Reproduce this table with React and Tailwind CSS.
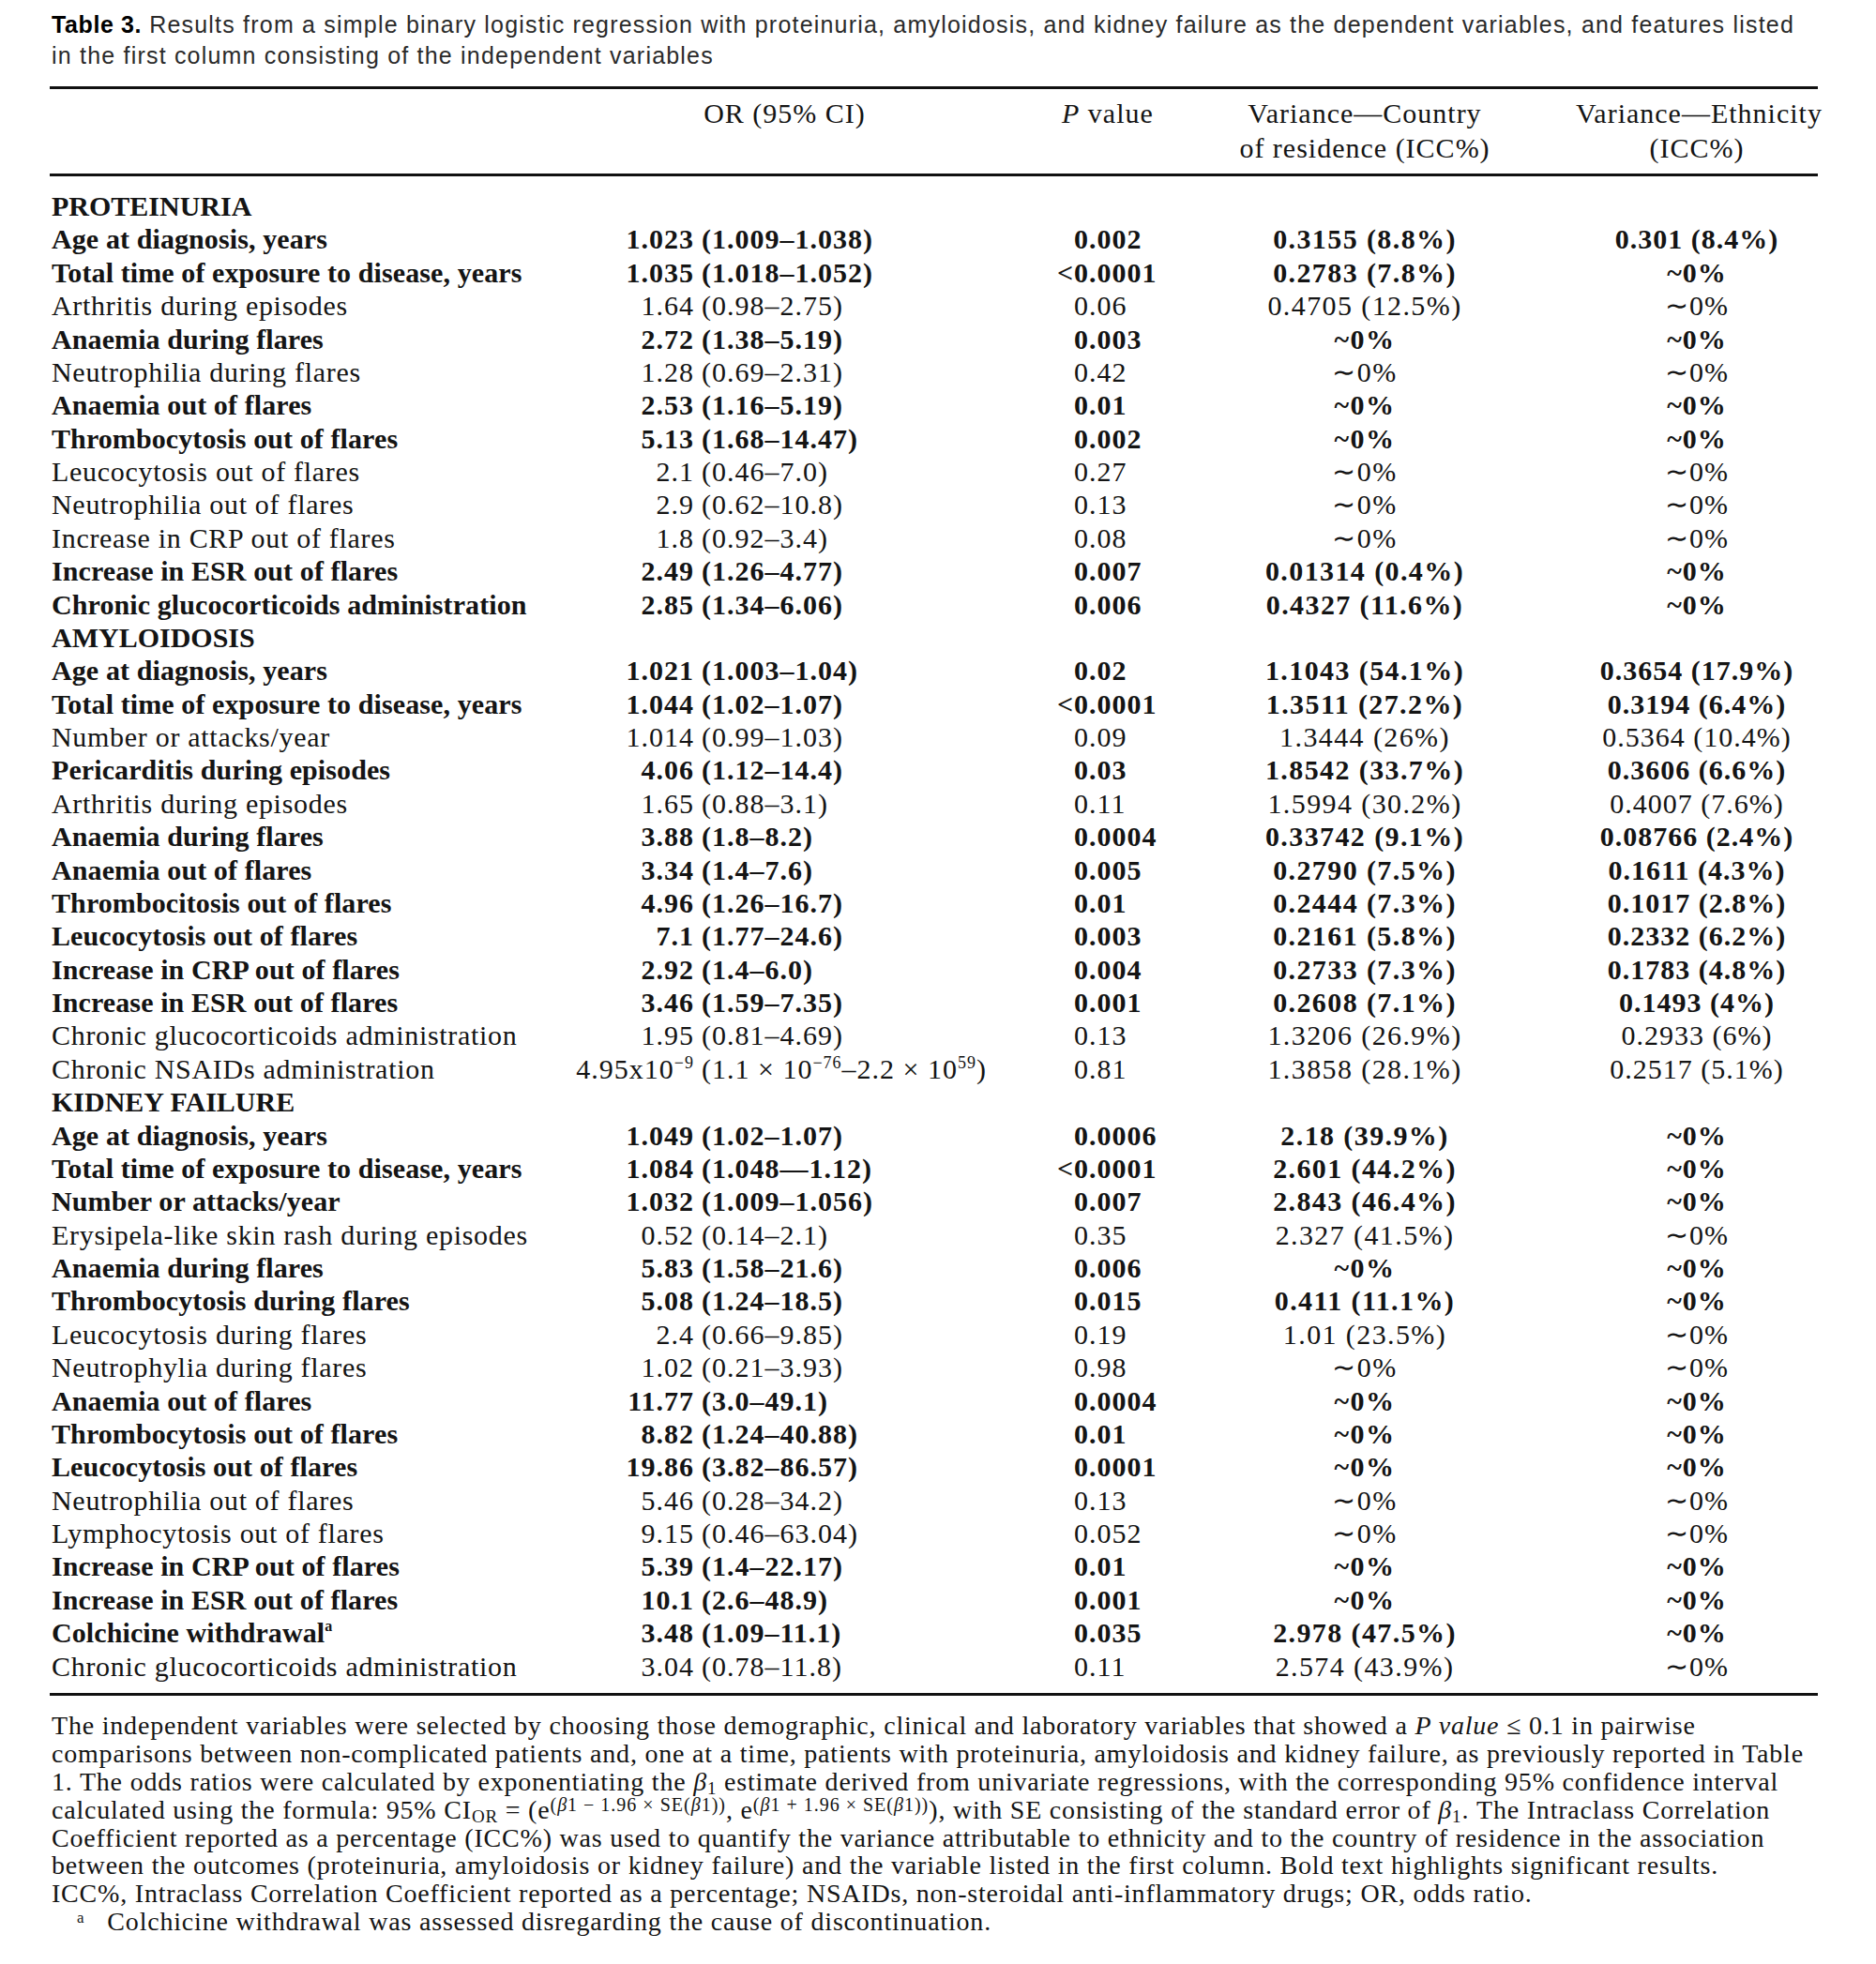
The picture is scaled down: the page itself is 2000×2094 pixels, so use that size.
import React from "react";

const sec = (title) => ({ h: title });
const sp = "text-[18px] leading-none relative top-[-11px]";

const rows = [
  sec("PROTEINURIA"),
  { l: "Age at diagnosis, years", n: "1.023", ci: "(1.009–1.038)", p: "0.002", c: "0.3155 (8.8%)", e: "0.301 (8.4%)", b: 1 },
  { l: "Total time of exposure to disease, years", n: "1.035", ci: "(1.018–1.052)", lt: 1, p: "0.0001", c: "0.2783 (7.8%)", e: "~0%", b: 1 },
  { l: "Arthritis during episodes", n: "1.64", ci: "(0.98–2.75)", p: "0.06", c: "0.4705 (12.5%)", e: "∼0%" },
  { l: "Anaemia during flares", n: "2.72", ci: "(1.38–5.19)", p: "0.003", c: "~0%", e: "~0%", b: 1 },
  { l: "Neutrophilia during flares", n: "1.28", ci: "(0.69–2.31)", p: "0.42", c: "∼0%", e: "∼0%" },
  { l: "Anaemia out of flares", n: "2.53", ci: "(1.16–5.19)", p: "0.01", c: "~0%", e: "~0%", b: 1 },
  { l: "Thrombocytosis out of flares", n: "5.13", ci: "(1.68–14.47)", p: "0.002", c: "~0%", e: "~0%", b: 1 },
  { l: "Leucocytosis out of flares", n: "2.1", ci: "(0.46–7.0)", p: "0.27", c: "∼0%", e: "∼0%" },
  { l: "Neutrophilia out of flares", n: "2.9", ci: "(0.62–10.8)", p: "0.13", c: "∼0%", e: "∼0%" },
  { l: "Increase in CRP out of flares", n: "1.8", ci: "(0.92–3.4)", p: "0.08", c: "∼0%", e: "∼0%" },
  { l: "Increase in ESR out of flares", n: "2.49", ci: "(1.26–4.77)", p: "0.007", c: "0.01314 (0.4%)", e: "~0%", b: 1 },
  { l: "Chronic glucocorticoids administration", n: "2.85", ci: "(1.34–6.06)", p: "0.006", c: "0.4327 (11.6%)", e: "~0%", b: 1 },
  sec("AMYLOIDOSIS"),
  { l: "Age at diagnosis, years", n: "1.021", ci: "(1.003–1.04)", p: "0.02", c: "1.1043 (54.1%)", e: "0.3654 (17.9%)", b: 1 },
  { l: "Total time of exposure to disease, years", n: "1.044", ci: "(1.02–1.07)", lt: 1, p: "0.0001", c: "1.3511 (27.2%)", e: "0.3194 (6.4%)", b: 1 },
  { l: "Number or attacks/year", n: "1.014", ci: "(0.99–1.03)", p: "0.09", c: "1.3444 (26%)", e: "0.5364 (10.4%)" },
  { l: "Pericarditis during episodes", n: "4.06", ci: "(1.12–14.4)", p: "0.03", c: "1.8542 (33.7%)", e: "0.3606 (6.6%)", b: 1 },
  { l: "Arthritis during episodes", n: "1.65", ci: "(0.88–3.1)", p: "0.11", c: "1.5994 (30.2%)", e: "0.4007 (7.6%)" },
  { l: "Anaemia during flares", n: "3.88", ci: "(1.8–8.2)", p: "0.0004", c: "0.33742 (9.1%)", e: "0.08766 (2.4%)", b: 1 },
  { l: "Anaemia out of flares", n: "3.34", ci: "(1.4–7.6)", p: "0.005", c: "0.2790 (7.5%)", e: "0.1611 (4.3%)", b: 1 },
  { l: "Thrombocitosis out of flares", n: "4.96", ci: "(1.26–16.7)", p: "0.01", c: "0.2444 (7.3%)", e: "0.1017 (2.8%)", b: 1 },
  { l: "Leucocytosis out of flares", n: "7.1", ci: "(1.77–24.6)", p: "0.003", c: "0.2161 (5.8%)", e: "0.2332 (6.2%)", b: 1 },
  { l: "Increase in CRP out of flares", n: "2.92", ci: "(1.4–6.0)", p: "0.004", c: "0.2733 (7.3%)", e: "0.1783 (4.8%)", b: 1 },
  { l: "Increase in ESR out of flares", n: "3.46", ci: "(1.59–7.35)", p: "0.001", c: "0.2608 (7.1%)", e: "0.1493 (4%)", b: 1 },
  { l: "Chronic glucocorticoids administration", n: "1.95", ci: "(0.81–4.69)", p: "0.13", c: "1.3206 (26.9%)", e: "0.2933 (6%)" },
  {
    l: "Chronic NSAIDs administration",
    n: (
      <>
        4.95x10<span className={sp}>−9</span>
      </>
    ),
    ci: (
      <>
        (1.1 × 10<span className={sp}>−76</span>–2.2 × 10<span className={sp}>59</span>)
      </>
    ),
    p: "0.81",
    c: "1.3858 (28.1%)",
    e: "0.2517 (5.1%)",
  },
  sec("KIDNEY FAILURE"),
  { l: "Age at diagnosis, years", n: "1.049", ci: "(1.02–1.07)", p: "0.0006", c: "2.18 (39.9%)", e: "~0%", b: 1 },
  { l: "Total time of exposure to disease, years", n: "1.084", ci: "(1.048—1.12)", lt: 1, p: "0.0001", c: "2.601 (44.2%)", e: "~0%", b: 1 },
  { l: "Number or attacks/year", n: "1.032", ci: "(1.009–1.056)", p: "0.007", c: "2.843 (46.4%)", e: "~0%", b: 1 },
  { l: "Erysipela-like skin rash during episodes", n: "0.52", ci: "(0.14–2.1)", p: "0.35", c: "2.327 (41.5%)", e: "∼0%" },
  { l: "Anaemia during flares", n: "5.83", ci: "(1.58–21.6)", p: "0.006", c: "~0%", e: "~0%", b: 1 },
  { l: "Thrombocytosis during flares", n: "5.08", ci: "(1.24–18.5)", p: "0.015", c: "0.411 (11.1%)", e: "~0%", b: 1 },
  { l: "Leucocytosis during flares", n: "2.4", ci: "(0.66–9.85)", p: "0.19", c: "1.01 (23.5%)", e: "∼0%" },
  { l: "Neutrophylia during flares", n: "1.02", ci: "(0.21–3.93)", p: "0.98", c: "∼0%", e: "∼0%" },
  { l: "Anaemia out of flares", n: "11.77", ci: "(3.0–49.1)", p: "0.0004", c: "~0%", e: "~0%", b: 1 },
  { l: "Thrombocytosis out of flares", n: "8.82", ci: "(1.24–40.88)", p: "0.01", c: "~0%", e: "~0%", b: 1 },
  { l: "Leucocytosis out of flares", n: "19.86", ci: "(3.82–86.57)", p: "0.0001", c: "~0%", e: "~0%", b: 1 },
  { l: "Neutrophilia out of flares", n: "5.46", ci: "(0.28–34.2)", p: "0.13", c: "∼0%", e: "∼0%" },
  { l: "Lymphocytosis out of flares", n: "9.15", ci: "(0.46–63.04)", p: "0.052", c: "∼0%", e: "∼0%" },
  { l: "Increase in CRP out of flares", n: "5.39", ci: "(1.4–22.17)", p: "0.01", c: "~0%", e: "~0%", b: 1 },
  { l: "Increase in ESR out of flares", n: "10.1", ci: "(2.6–48.9)", p: "0.001", c: "~0%", e: "~0%", b: 1 },
  {
    l: (
      <>
        Colchicine withdrawal<span className="text-[16px] leading-none relative top-[-12px] font-bold">a</span>
      </>
    ),
    n: "3.48",
    ci: "(1.09–11.1)",
    p: "0.035",
    c: "2.978 (47.5%)",
    e: "~0%",
    b: 1,
  },
  { l: "Chronic glucocorticoids administration", n: "3.04", ci: "(0.78–11.8)", p: "0.11", c: "2.574 (43.9%)", e: "∼0%" },
];

function Row({ r }) {
  if (r.h) {
    return (
      <div className="h-[35.38px] leading-[35.38px] pl-[2px] font-bold whitespace-nowrap">{r.h}</div>
    );
  }
  const bold = r.b ? "font-bold" : "font-normal";
  const lab = r.b ? "tracking-[0.1px]" : "tracking-[0.7px]";
  return (
    <div className={`flex h-[35.38px] leading-[35.38px] whitespace-nowrap ${bold}`}>
      <div className={`w-[520px] pl-[2px] ${lab}`}>{r.l}</div>
      <div className="w-[527px] flex tracking-[1px]">
        <div className="w-[167px] text-right">{r.n}</div>
        <div className="pl-[8px]">{r.ci}</div>
      </div>
      <div className="w-[180px] flex tracking-[1px]">
        <div className="w-[45px] text-right">{r.lt ? "<" : ""}</div>
        <div>{r.p}</div>
      </div>
      <div className="w-[350px] text-center tracking-[1.4px]">{r.c}</div>
      <div className="w-[50px]" />
      <div className="w-[258px] text-center tracking-[1px]">{r.e}</div>
    </div>
  );
}

const sup = "text-[20px] leading-none relative top-[-8px] tracking-[1px]";
const sb = "text-[19px] leading-none relative top-[4px]";

export default function App() {
  return (
    <div className="w-[2000px] h-[2094px] bg-white text-[#141414] overflow-hidden">
      <div className="pt-[10px] pl-[55px] font-['Liberation_Sans',Arial,sans-serif] text-[25px] leading-[33px] tracking-[1.2px] text-[#2a2a2a] whitespace-nowrap">
        <div>
          <span className="font-bold text-black tracking-[0.6px]">Table 3.</span> Results from a simple binary logistic regression with proteinuria, amyloidosis, and kidney failure as the dependent variables, and features listed
        </div>
        <div>in the first column consisting of the independent variables</div>
      </div>

      <div className="ml-[53px] w-[1885px] mt-[16px] font-['Liberation_Serif','Times_New_Roman',serif] text-[30px]">
        <div className="h-[3px] bg-[#111]" />
        <div className="flex pt-[7px] pb-[9px] leading-[37px] tracking-[1px] whitespace-nowrap">
          <div className="w-[520px]" />
          <div className="w-[527px] text-center">OR (95% CI)</div>
          <div className="w-[180px] pl-[32px]">
            <i>P</i> value
          </div>
          <div className="w-[350px] text-center">
            <div>Variance—Country</div>
            <div>of residence (ICC%)</div>
          </div>
          <div className="w-[50px]" />
          <div className="w-[258px] text-center">
            <div>Variance—Ethnicity</div>
            <div>(ICC%)</div>
          </div>
        </div>
        <div className="h-[3px] bg-[#111]" />
        <div className="pt-[14px] pb-[11px]">
          {rows.map((r, i) => (
            <Row key={i} r={r} />
          ))}
        </div>
        <div className="h-[3px] bg-[#111]" />
      </div>

      <div className="pl-[55px] pt-[17px] font-['Liberation_Serif','Times_New_Roman',serif] text-[28px] leading-[29.9px] tracking-[0.8px] text-[#141414] whitespace-nowrap">
        <div>
          The independent variables were selected by choosing those demographic, clinical and laboratory variables that showed a <i>P value</i> ≤ 0.1 in pairwise
        </div>
        <div>
          comparisons between non-complicated patients and, one at a time, patients with proteinuria, amyloidosis and kidney failure, as previously reported in Table
        </div>
        <div>
          1. The odds ratios were calculated by exponentiating the <i>β</i>
          <span className={sb}>1</span> estimate derived from univariate regressions, with the corresponding 95% confidence interval
        </div>
        <div>
          calculated using the formula: 95% CI<span className={sb}>OR</span> = (e
          <span className={sup}>
            (<i>β</i>1 − 1.96 × SE(<i>β</i>1))
          </span>
          , e
          <span className={sup}>
            (<i>β</i>1 + 1.96 × SE(<i>β</i>1))
          </span>
          ), with SE consisting of the standard error of <i>β</i>
          <span className={sb}>1</span>. The Intraclass Correlation
        </div>
        <div>
          Coefficient reported as a percentage (ICC%) was used to quantify the variance attributable to ethnicity and to the country of residence in the association
        </div>
        <div>
          between the outcomes (proteinuria, amyloidosis or kidney failure) and the variable listed in the first column. Bold text highlights significant results.
        </div>
        <div>ICC%, Intraclass Correlation Coefficient reported as a percentage; NSAIDs, non-steroidal anti-inflammatory drugs; OR, odds ratio.</div>
        <div className="pl-[27px]">
          <span className="text-[17px] leading-none relative top-[-8px]">a</span>
          <span className="pl-[24px]">Colchicine withdrawal was assessed disregarding the cause of discontinuation.</span>
        </div>
      </div>
    </div>
  );
}
